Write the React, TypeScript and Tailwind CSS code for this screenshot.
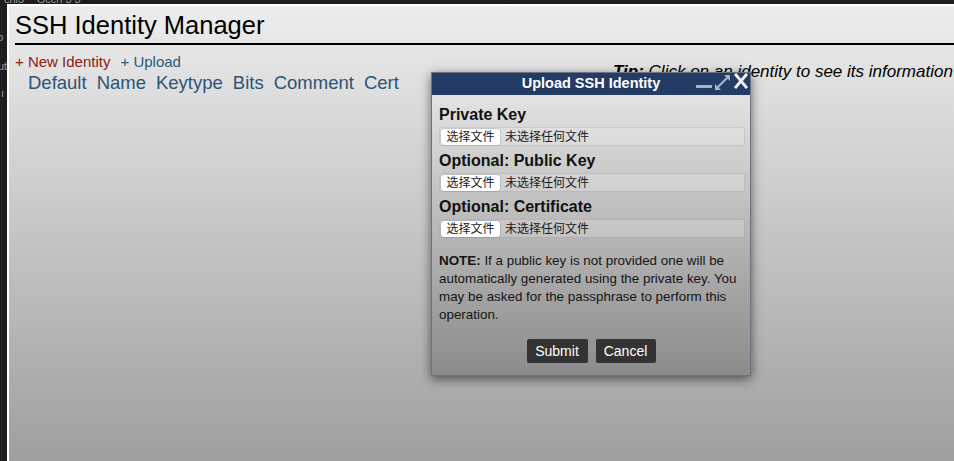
import React from 'react';

const sans = { fontFamily: '"Liberation Sans", Arial, "Noto Sans CJK SC", sans-serif' };

function FileField() {
    return (
        <div className="mt-[2px] flex h-[19px] items-center rounded-[2px] border border-black/10 bg-white/20 pl-[1px]">
            <span className="flex h-[16px] w-[59px] items-center justify-center rounded-[3px] bg-white text-[12px] leading-none text-[#222] shadow-[0_0_0_0.5px_rgba(0,0,0,0.2)]">
                选择文件
            </span>
            <span className="ml-[5px] text-[12px] leading-none text-[#1a1a1a]">未选择任何文件</span>
        </div>
    );
}

function UploadDialog() {
    return (
        <div className="absolute left-[431px] top-[72px] w-[320px] border border-[#6d7480] shadow-[0_3px_10px_rgba(0,0,0,0.55)]">
            {/* title bar */}
            <div className="relative flex h-[22px] items-center justify-center bg-[#233b65]">
                <span className="text-[14.5px] font-bold text-white">Upload SSH Identity</span>
                <svg className="absolute right-[1px] top-[0px]" width="54" height="18" viewBox="0 0 54 18">
                    <rect x="1" y="12" width="16" height="3" fill="#a9b3c2" />
                    <g stroke="#a9b3c2" strokeWidth="2.2" fill="#a9b3c2">
                        <line x1="22" y1="15" x2="33" y2="4" />
                        <polygon points="35,2 35,8 29,2" stroke="none" />
                        <polygon points="20,17 20,11 26,17" stroke="none" />
                    </g>
                    <g stroke="#eef1f5" strokeWidth="3" strokeLinecap="square">
                        <line x1="41" y1="2" x2="51" y2="14" />
                        <line x1="51" y1="2" x2="41" y2="14" />
                    </g>
                </svg>
            </div>

            {/* body */}
            <div className="bg-gradient-to-b from-[#e3e3e3] to-[#8b8b8b] pb-[12px] pl-[7px] pr-[5px] pt-[10px] text-[#111]">
                <div className="text-[16px] font-bold leading-[20px]">Private Key</div>
                <FileField />
                <div className="mt-[5px] text-[16px] font-bold leading-[20px]">Optional: Public Key</div>
                <FileField />
                <div className="mt-[5px] text-[16px] font-bold leading-[20px]">Optional: Certificate</div>
                <FileField />

                <p className="mt-[14px] text-[13.4px] leading-[18px] text-[#151515]">
                    <b>NOTE:</b> If a public key is not provided one will be automatically generated using the
                    private key. You may be asked for the passphrase to perform this operation.
                </p>

                <div className="mt-[15px] flex justify-center gap-[8px] pr-[2px]">
                    <button className="h-[24px] w-[61px] rounded-[2px] bg-[#333] text-[14px] text-white">Submit</button>
                    <button className="h-[24px] w-[60px] rounded-[2px] bg-[#333] text-[14px] text-white">Cancel</button>
                </div>
            </div>
        </div>
    );
}

export default function App() {
    return (
        <div className="relative h-[461px] w-[954px] overflow-hidden bg-[#1d1d1d]" style={sans}>
            {/* bits of the window behind */}
            <div className="absolute left-[4px] top-[-9px] text-[11px] text-[#9a9a9a]">chl3 ~ Gcch 3 3</div>
            <div className="absolute left-[-3px] top-[29px] text-[11px] text-[#9a9a9a]">p</div>
            <div className="absolute left-[-2px] top-[58px] text-[11px] text-[#9a9a9a]">ut</div>
            <div className="absolute left-[1px] top-[85px] text-[11px] text-[#9a9a9a]">ı</div>

            <div className="absolute inset-0 pl-[7px] pt-[4px]">
                <div className="relative h-full border-l-2 border-t-2 border-white bg-gradient-to-b from-[#ededed] to-[#9f9f9f] pl-[6px]">
                    <h1 className="pt-[5px] text-[25.5px] leading-[29px] text-black">SSH Identity Manager</h1>
                    <div className="mt-[3px] h-[2px] bg-black" />

                    <div className="flex">
                        <div className="w-[598px] shrink-0">
                            <div className="mt-[7px] flex gap-[10px] text-[15px] leading-[20px]">
                                <span className="text-[#8c1c16]">+ New Identity</span>
                                <span className="text-[#2d5978]">+ Upload</span>
                            </div>
                            <div className="mt-[0px] flex gap-[10px] pl-[13px] text-[18.5px] leading-[22px] text-[#2c5574]">
                                <span>Default</span>
                                <span>Name</span>
                                <span>Keytype</span>
                                <span>Bits</span>
                                <span>Comment</span>
                                <span>Cert</span>
                            </div>
                        </div>
                        <div className="mt-[17px] whitespace-nowrap text-[17px] italic leading-[20px] text-black">
                            <b>Tip:</b> Click on an identity to see its information
                        </div>
                    </div>
                </div>
            </div>

            <UploadDialog />
        </div>
    );
}
